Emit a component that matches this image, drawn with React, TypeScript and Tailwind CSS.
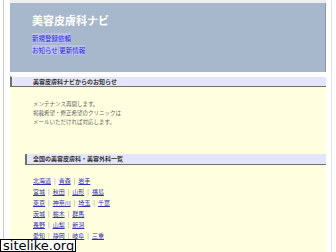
import React from "react";

const jp = { fontFamily: '"Noto Sans CJK JP", "Noto Sans", sans-serif' };

const rows: string[][] = [
  ["北海道", "青森", "岩手"],
  ["宮城", "秋田", "山形", "福島"],
  ["東京", "神奈川", "埼玉", "千葉"],
  ["茨城", "栃木", "群馬"],
  ["長野", "山梨", "新潟"],
  ["愛知", "静岡", "岐阜", "三重"],
];

export default function App() {
  return (
    <div className="relative w-[336px] h-[252px] overflow-hidden bg-white flex" style={jp}>
      <div className="w-[10px] shrink-0 flex">
        <div className="ml-[3px] w-[1px] bg-[#c8c8c8]" />
      </div>
      <div className="w-[316px] flex flex-col">
        <div className="h-[3px] bg-[#eeeeee]" />
        <div className="h-[69px] bg-[#a7b7cc] border-r border-[#8898b0] pl-[22px] pt-[11px] flex flex-col">
          <div className="text-[11px] leading-[12px] font-bold text-white">美容皮膚科ナビ</div>
          <div className="mt-[8px] text-[6.5px] leading-[8px] text-[#2a2ae0]">
            <span className="bg-[#bcc0ee]">新規登録依頼</span>
          </div>
          <div className="mt-[4px] text-[6.5px] leading-[8px] text-[#2a2ae0]">
            <span className="bg-[#bcc0ee]">お知らせ</span> <span className="bg-[#bcc0ee]">更新情報</span>
          </div>
        </div>
        <div className="h-[4px]" />
        <div className="h-[11px] bg-[#e4e4fa] border-l-2 border-b border-[#707070] border-t border-t-white pl-[21px] flex items-center">
          <span className="text-[6px] leading-[8px] font-bold text-[#333333]">美容皮膚科ナビからのお知らせ</span>
        </div>
        <div className="flex-1 bg-[#ffffdf] flex flex-col">
          <div className="h-[67px] pl-[23px] pt-[13px] text-[5.5px] leading-[9px] text-[#666666]">
            <div>メンテナンス再開します。</div>
            <div>掲載希望・修正希望のクリニックは</div>
            <div>メールいただければ対応します。</div>
          </div>
          <div className="ml-[15px] h-[11px] bg-[#e4e4fa] border-l-2 border-b border-[#707070] pl-[6px] flex items-center">
            <span className="text-[6px] leading-[8px] font-bold text-[#333333]">全国の美容皮膚科・美容外科一覧</span>
          </div>
          <div className="pl-[23px] pt-[10px] flex flex-col">
            {rows.map((r, i) => (
              <div key={i} className="h-[11px] text-[6px] leading-[11px] text-[#888888]">
                {r.map((c, j) => (
                  <React.Fragment key={j}>
                    {j > 0 && <span className="mx-[3px]">|</span>}
                    <span className="text-[#3030b0] underline">{c}</span>
                  </React.Fragment>
                ))}
              </div>
            ))}
          </div>
        </div>
      </div>
      <div className="w-[10px] shrink-0 flex">
        <div className="ml-[5px] w-[1px] bg-[#e2e2e2]" />
      </div>
      <div
        className="absolute left-0 bottom-0 w-[76px] h-[13px] bg-white border border-black flex items-center pl-[2px] text-[13px] leading-[12px] text-black"
        style={{ fontFamily: '"DejaVu Sans", sans-serif' }}
      >
        sitelike.org
      </div>
    </div>
  );
}
